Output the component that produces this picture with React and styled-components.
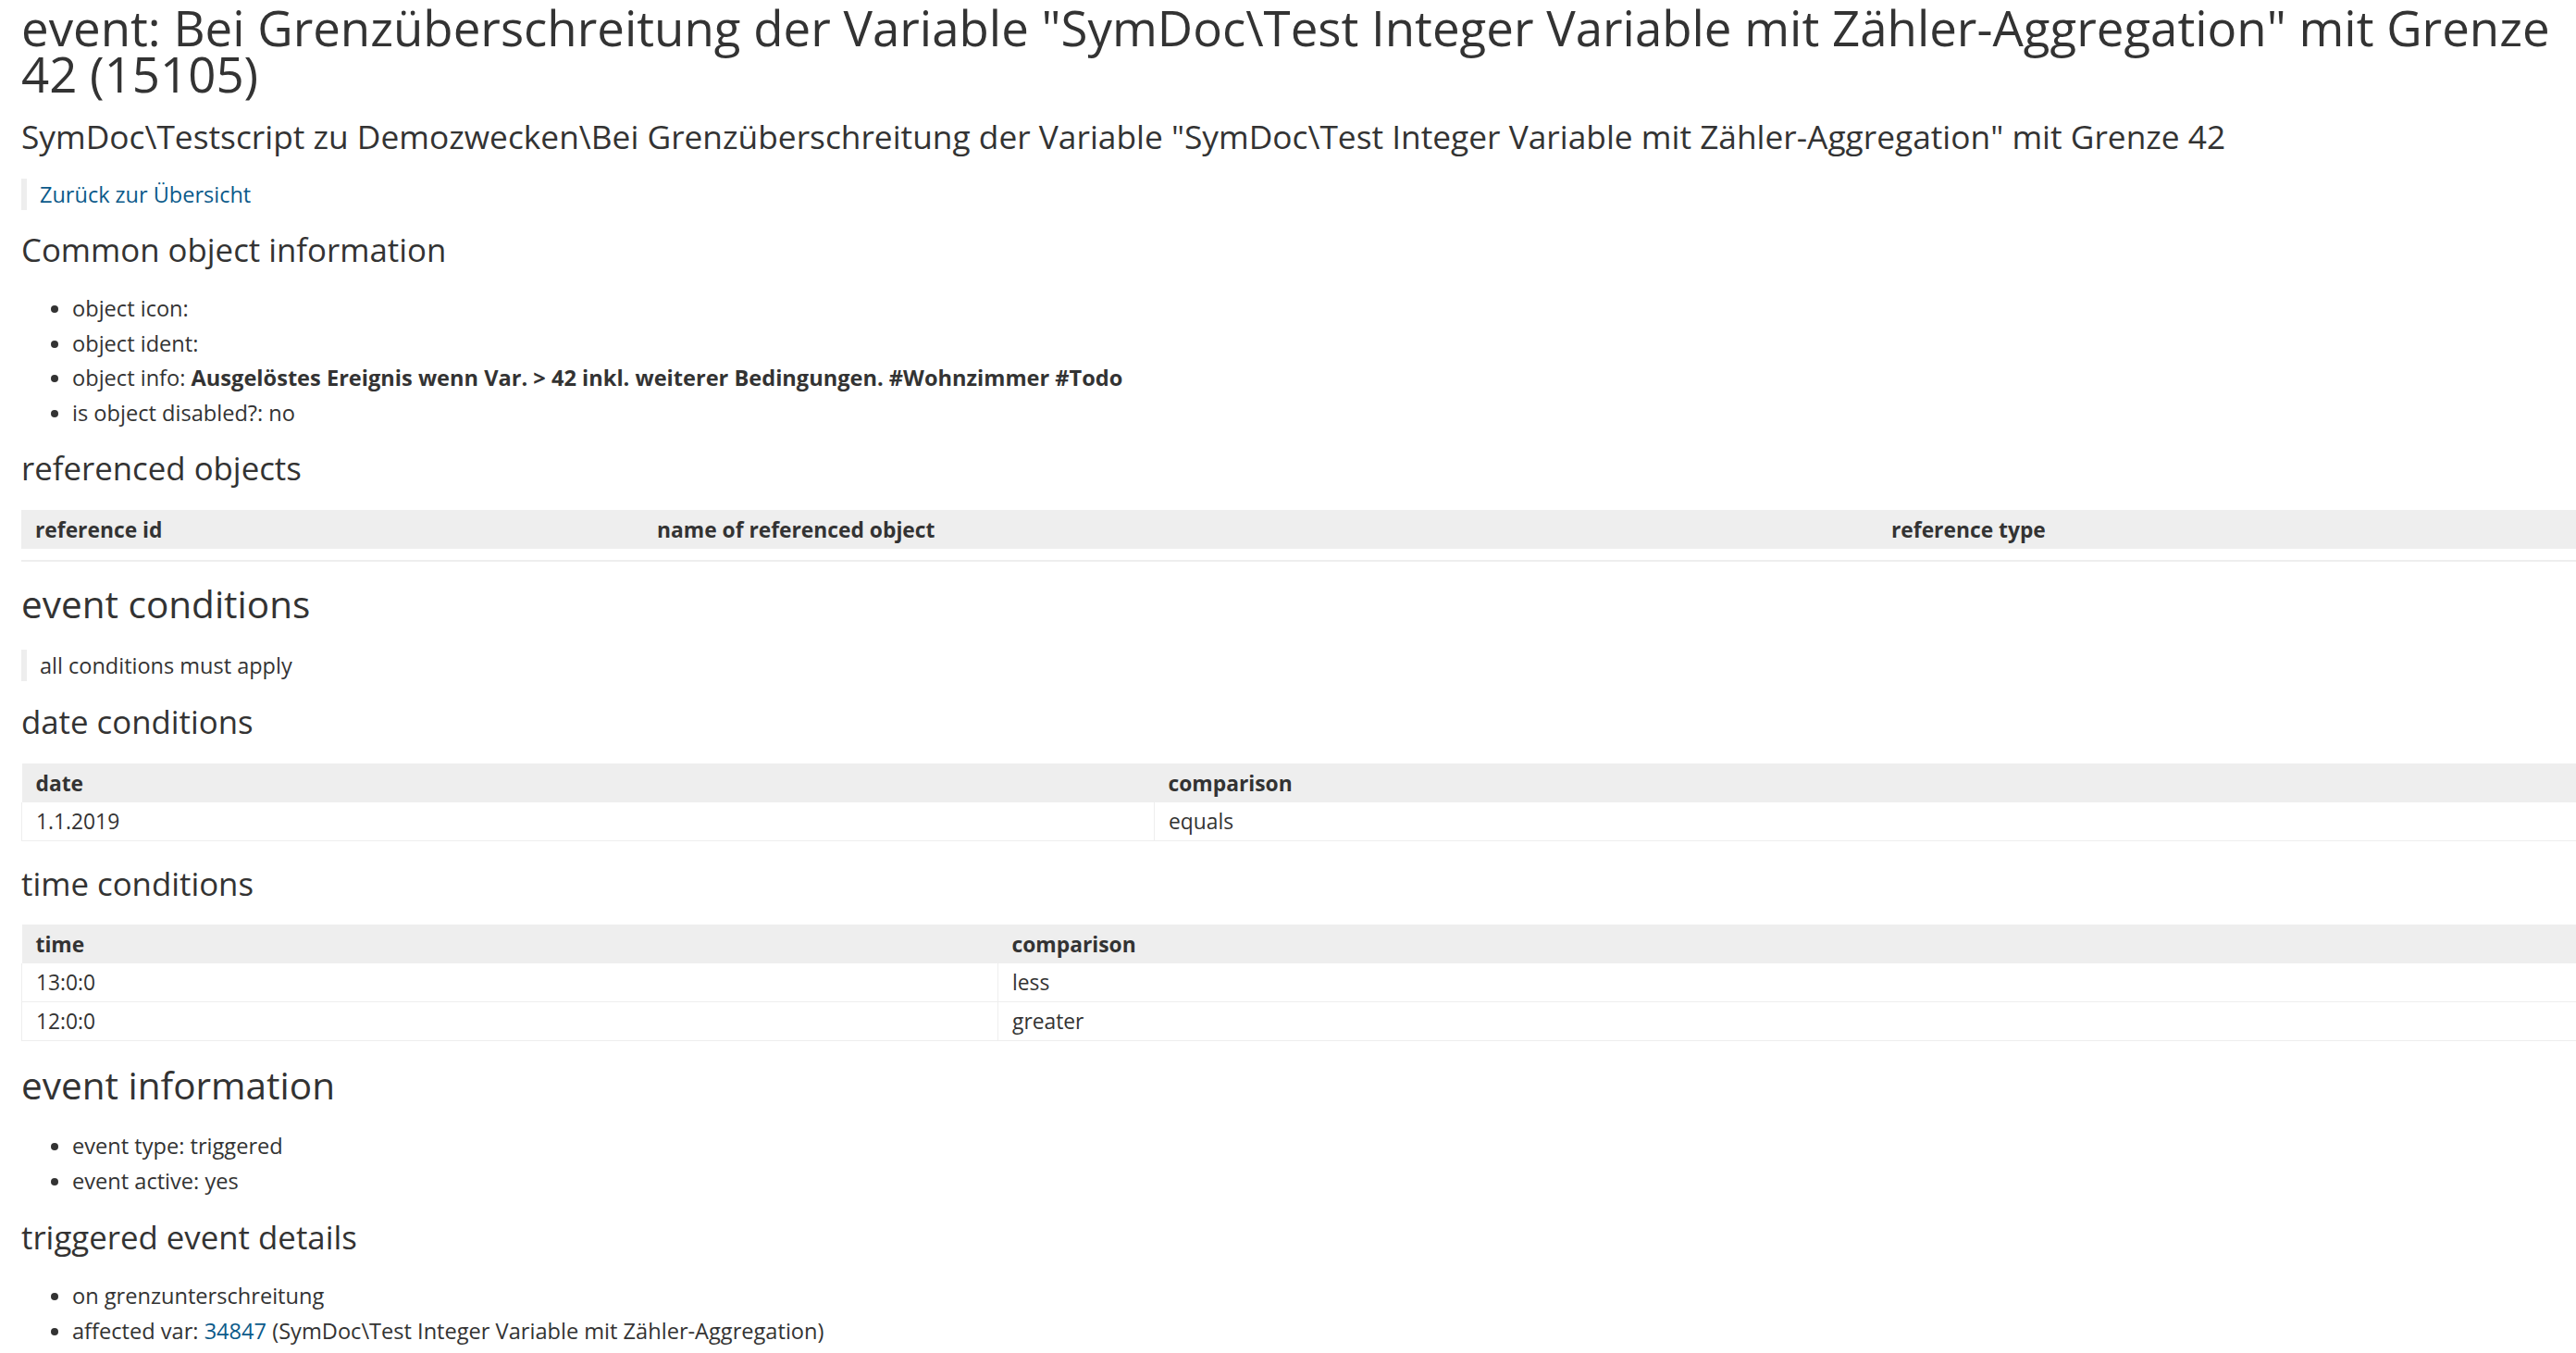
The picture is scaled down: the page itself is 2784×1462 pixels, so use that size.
import React from "react";
import styled, { createGlobalStyle } from "styled-components";

const GlobalStyle = createGlobalStyle`
  html, body {
    margin: 0;
    padding: 0;
    background: #ffffff;
  }
  body {
    font-family: "Open Sans", "Liberation Sans", sans-serif;
    color: #333333;
    font-size: 23px;
  }
`;

const referenceColumns = ["reference id", "name of referenced object", "reference type"];

const dateRows = [{ date: "1.1.2019", comparison: "equals" }];

const timeRows = [
  { time: "13:0:0", comparison: "less" },
  { time: "12:0:0", comparison: "greater" },
];

function App() {
  return (
    <Page>
      <GlobalStyle />
      <Title>
        event: Bei Grenzüberschreitung der Variable "SymDoc\Test Integer Variable mit
        Zähler-Aggregation" mit Grenze 42 (15105)
      </Title>
      <SubTitle>
        SymDoc\Testscript zu Demozwecken\Bei Grenzüberschreitung der Variable "SymDoc\Test
        Integer Variable mit Zähler-Aggregation" mit Grenze 42
      </SubTitle>
      <Note $top={25}>
        <Link href="#">Zurück zur Übersicht</Link>
      </Note>

      <SectionTitle $top={24}>Common object information</SectionTitle>
      <List $top={26}>
        <li>object icon:</li>
        <li>object ident:</li>
        <li>
          object info: <strong>Ausgelöstes Ereignis wenn Var. &gt; 42 inkl. weiterer Bedingungen. #Wohnzimmer #Todo</strong>
        </li>
        <li>is object disabled?: no</li>
      </List>

      <SectionTitle $top={22}>referenced objects</SectionTitle>
      <Table>
        <colgroup>
          <col style={{ width: 672 }} />
          <col style={{ width: 1334 }} />
          <col />
        </colgroup>
        <thead>
          <tr>
            {referenceColumns.map((c) => (
              <Th key={c}>{c}</Th>
            ))}
          </tr>
        </thead>
      </Table>
      <EmptyBody />

      <BigTitle $top={23}>event conditions</BigTitle>
      <Note $top={26}>all conditions must apply</Note>

      <SectionTitle $top={25}>date conditions</SectionTitle>
      <Table>
        <colgroup>
          <col style={{ width: 1224 }} />
          <col />
        </colgroup>
        <thead>
          <tr>
            <Th>date</Th>
            <Th>comparison</Th>
          </tr>
        </thead>
        <tbody>
          {dateRows.map((r) => (
            <tr key={r.date}>
              <Td>{r.date}</Td>
              <Td>{r.comparison}</Td>
            </tr>
          ))}
        </tbody>
      </Table>

      <SectionTitle $top={27}>time conditions</SectionTitle>
      <Table $top={25}>
        <colgroup>
          <col style={{ width: 1055 }} />
          <col />
        </colgroup>
        <thead>
          <tr>
            <Th>time</Th>
            <Th>comparison</Th>
          </tr>
        </thead>
        <tbody>
          {timeRows.map((r) => (
            <tr key={r.time}>
              <Td>{r.time}</Td>
              <Td>{r.comparison}</Td>
            </tr>
          ))}
        </tbody>
      </Table>

      <BigTitle $top={25}>event information</BigTitle>
      <List $top={24}>
        <li>event type: triggered</li>
        <li>event active: yes</li>
      </List>

      <SectionTitle $top={23}>triggered event details</SectionTitle>
      <List $top={26}>
        <li>on grenzunterschreitung</li>
        <li>
          affected var: <Link href="#">34847</Link> (SymDoc\Test Integer Variable mit Zähler-Aggregation)
        </li>
      </List>
    </Page>
  );
}

export default App;

const Page = styled.div`
  padding: 5px 0 40px 23px;
`;

const Title = styled.h1`
  margin: 0;
  font-size: 52.8px;
  line-height: 50px;
  font-weight: 400;
`;

const SubTitle = styled.h2`
  margin: 21px 0 0;
  font-size: 35.3px;
  line-height: 42px;
  font-weight: 400;
`;

const BigTitle = styled.h2`
  margin: ${(props) => props.$top}px 0 0;
  font-size: 40.5px;
  line-height: 46px;
  font-weight: 400;
`;

const SectionTitle = styled.h3`
  margin: ${(props) => props.$top}px 0 0;
  font-size: 34.8px;
  line-height: 38px;
  font-weight: 400;
`;

const Note = styled.div`
  margin-top: ${(props) => props.$top}px;
  border-left: 6px solid #eeeeee;
  padding-left: 14px;
  line-height: 34px;
  font-size: 23.5px;
`;

const Link = styled.a`
  color: #0b5a8a;
  text-decoration: none;
`;

const List = styled.ul`
  margin: ${(props) => props.$top}px 0 0;
  padding-left: 55px;
  line-height: 37.5px;
  font-size: 23.6px;

  strong {
    font-weight: 700;
  }
`;

const Table = styled.table`
  margin-top: ${(props) => props.$top ?? 26}px;
  width: 100%;
  border-collapse: collapse;
  table-layout: fixed;
  font-size: 22.8px;
`;

const Th = styled.th`
  background: #eeeeee;
  height: 42px;
  padding: 0 15px;
  text-align: left;
  font-weight: 700;
  font-size: 22.8px;
`;

const Td = styled.td`
  height: 41px;
  padding: 0 15px;
  border: 1px solid #eeeeee;
  border-top: none;
  border-right: none;
`;

const EmptyBody = styled.div`
  margin-top: 12px;
  height: 2px;
  background: #eeeeee;
`;
